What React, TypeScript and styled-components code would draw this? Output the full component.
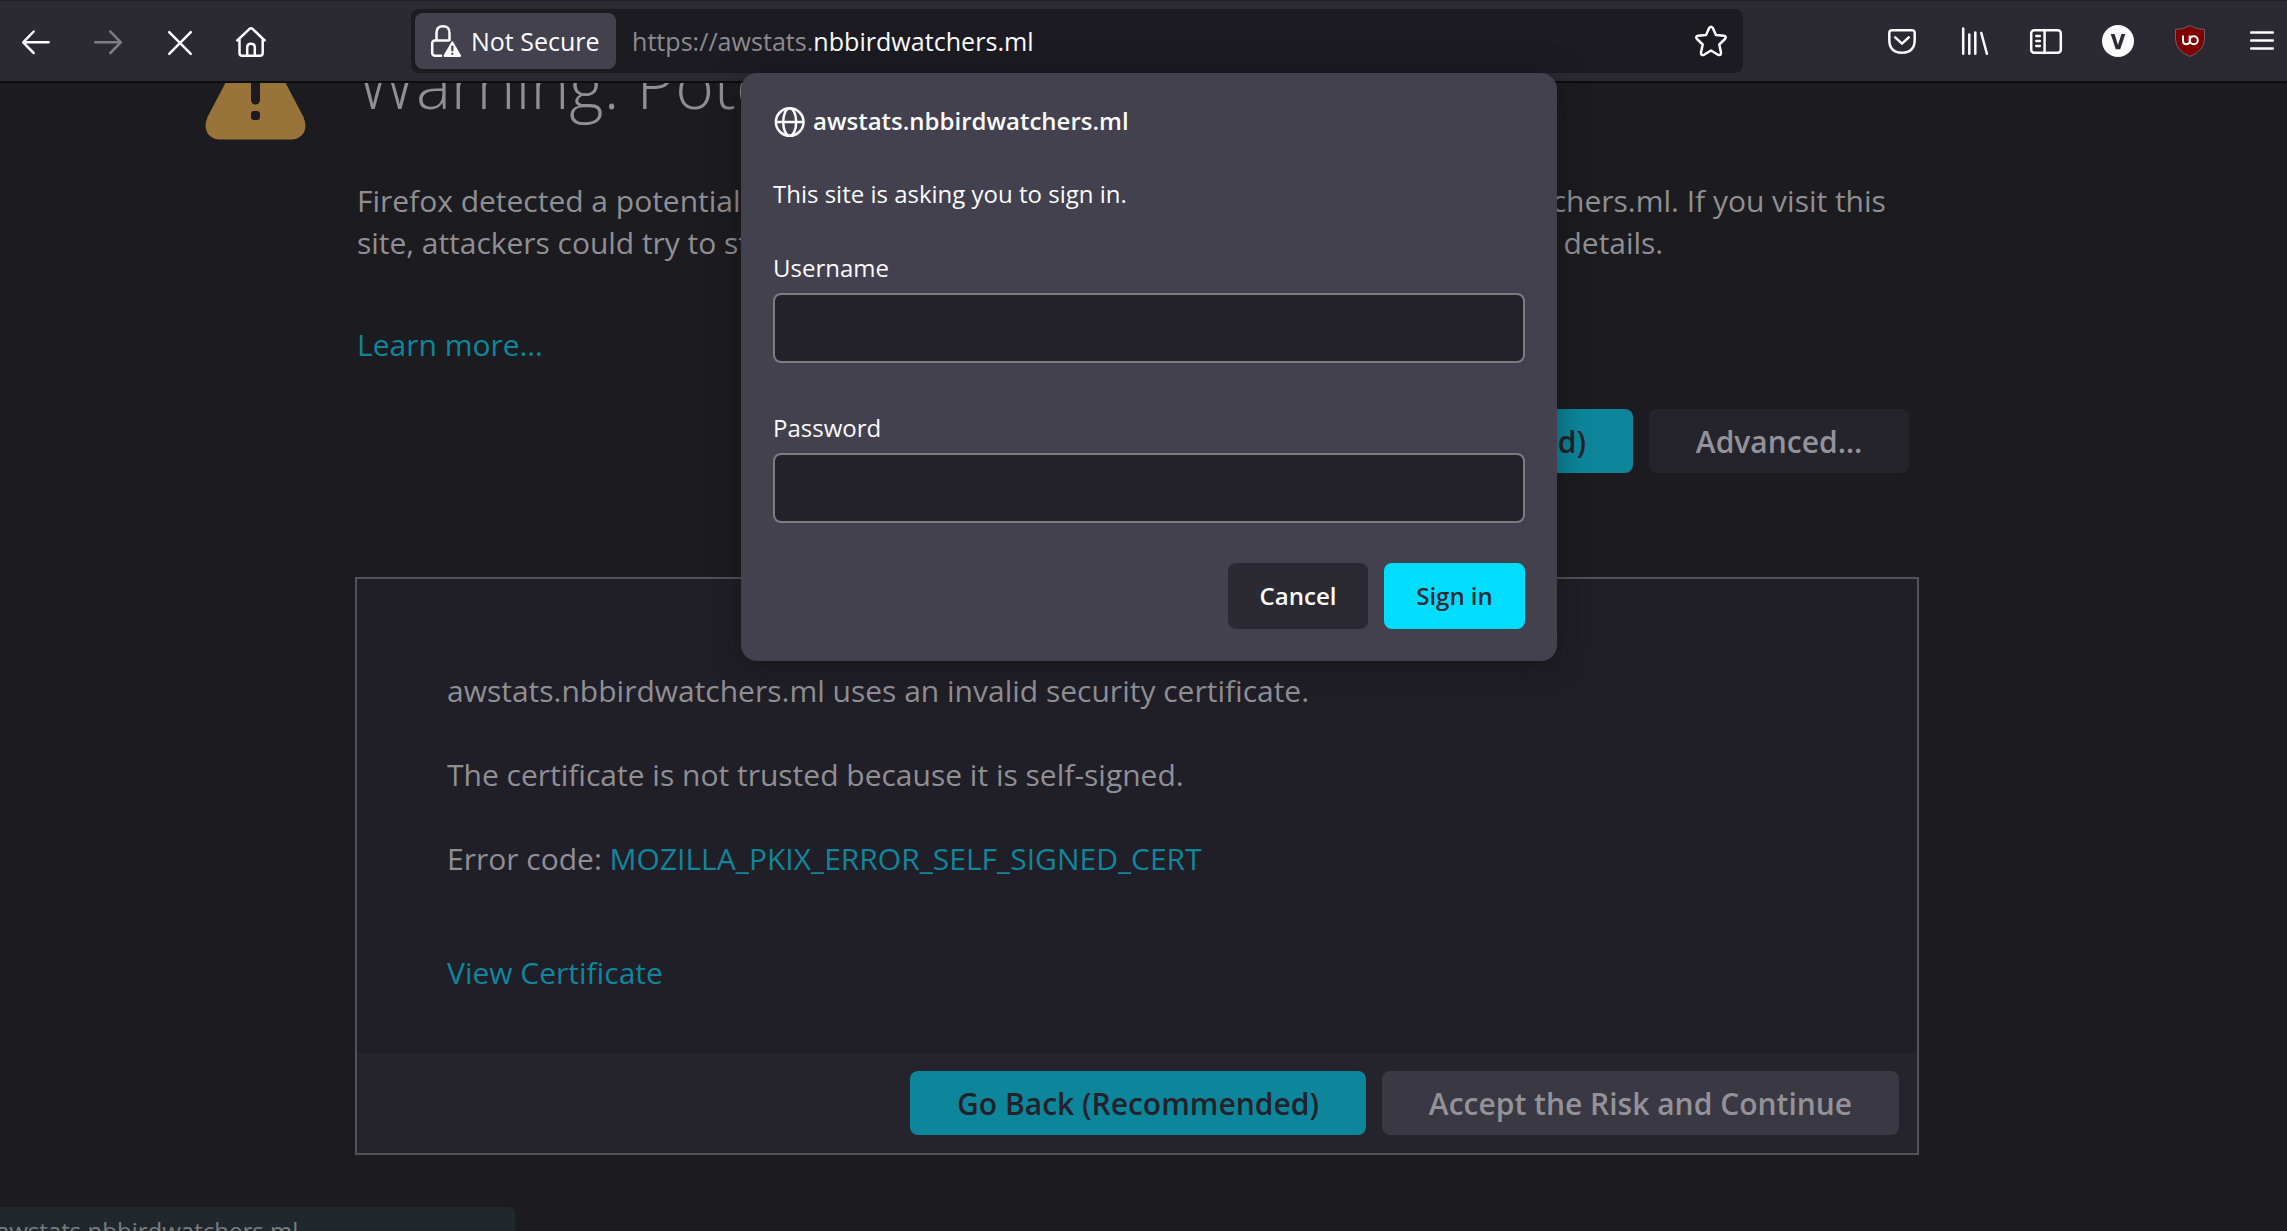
import React from "react";
import styled, { createGlobalStyle } from "styled-components";

const Global = createGlobalStyle`
  * { box-sizing: border-box; }
  html, body { margin: 0; padding: 0; background: #1c1b20; overflow: hidden; }
  body { font-family: "Open Sans", "Noto Sans", sans-serif; }
  p, h1 { margin: 0; }
  button { font-family: inherit; border: 0; padding: 0; margin: 0; }
`;

const Window = styled.div`
  position: relative;
  width: 2287px;
  height: 1231px;
  overflow: hidden;
  display: flex;
  flex-direction: column;
`;

const Toolbar = styled.header`
  flex: none;
  height: 83px;
  display: flex;
  align-items: center;
  background: #2b2a33;
  border-top: 1px solid #1f1e25;
  border-bottom: 2px solid #0d0c0f;
`;

const NavGroup = styled.nav`
  display: flex;
  flex: none;
  align-items: center;
  width: 411px;
`;

const ActionGroup = styled.div`
  display: flex;
  flex: none;
  align-items: center;
  margin-left: 123px;
`;

const IconButton = styled.button<{ $dim?: boolean }>`
  width: 72px;
  height: 64px;
  flex: none;
  display: flex;
  align-items: center;
  justify-content: center;
  background: none;
  color: #fbfbfe;
  opacity: ${(p) => (p.$dim ? 0.4 : 1)};
`;

const HomeButton = styled(IconButton)`
  width: 70px;
`;

const UrlBar = styled.div`
  width: 1332px;
  flex: none;
  height: 64px;
  padding: 0 4px;
  display: flex;
  align-items: center;
  background: #1c1b22;
  border-radius: 8px;
`;

const Identity = styled.div`
  width: 201px;
  height: 56px;
  padding-left: 14px;
  display: flex;
  align-items: center;
  gap: 8px;
  border-radius: 8px;
  background: #42414d;
  color: #fbfbfe;
  font-size: 25px;
  white-space: nowrap;
`;

const Address = styled.div`
  flex: 1;
  padding-left: 16px;
  font-size: 25.1px;
  color: #fbfbfe;
  white-space: nowrap;
`;

const Faded = styled.span`
  color: #8c8b91;
`;

const StarSlot = styled.div`
  display: flex;
  margin-right: 10px;
`;

const Page = styled.main`
  flex: 1;
  min-height: 0;
  overflow: hidden;
  padding-left: 205px;
  color: #908f94;
  font-size: 30px;
  line-height: 42px;
`;

const Heading = styled.div`
  display: flex;
  height: 90px;
  margin-top: -50px;
  gap: 51px;
`;

const Title = styled.h1`
  font-size: 66px;
  line-height: 90px;
  font-weight: 300;
  white-space: nowrap;
  padding-top: 5px;
`;

const Content = styled.section`
  width: 1564px;
  margin-left: 150px;
`;

const Intro = styled.p`
  padding: 57px 0 0 2px;
  white-space: nowrap;
`;

const Line = styled.span<{ $tracking: number }>`
  display: block;
  letter-spacing: ${(p) => p.$tracking}px;
`;

const LinkRow = styled.p`
  padding: 60px 0 0 2px;
`;

const Link = styled.a`
  color: #0f869b;
`;

const ButtonRow = styled.div`
  display: flex;
  justify-content: flex-end;
  gap: 16px;
  padding: 43px 10px 0 0;
`;

const PageButton = styled.button<{ $w: number; $kind: "primary" | "plain" | "raised" }>`
  width: ${(p) => p.$w}px;
  height: 64px;
  padding-top: 2px;
  border-radius: 8px;
  font-size: 30px;
  font-weight: 600;
  line-height: 42px;
  white-space: nowrap;
  color: ${(p) => (p.$kind === "primary" ? "#23222b" : "#939298")};
  background: ${(p) => ({ primary: "#0d869b", plain: "#25242c", raised: "#3a3842" })[p.$kind]};
`;

const ErrorPanel = styled.section`
  margin-top: 104px;
  height: 578px;
  display: flex;
  flex-direction: column;
  border: 2px solid #535259;
  background: #201e27;
`;

const ErrorText = styled.div`
  flex: 1;
  padding: 91px 0 0 90px;
  display: flex;
  flex-direction: column;
  gap: 42px;
`;

const CertificateRow = styled.p`
  padding-top: 30px;
`;

const PanelFooter = styled.div`
  height: 100px;
  display: flex;
  align-items: center;
  justify-content: flex-end;
  gap: 16px;
  padding-right: 18px;
  background: #25232c;
`;

const Dialog = styled.form`
  position: absolute;
  left: 741px;
  top: 73px;
  width: 816px;
  height: 588px;
  padding: 32px;
  display: flex;
  flex-direction: column;
  border-radius: 16px;
  background: #42414d;
  color: #fbfbfe;
  font-size: 24px;
  line-height: 32px;
  box-shadow: 0 4px 32px rgba(12, 12, 13, 0.4);
`;

const DialogTitle = styled.div`
  display: flex;
  align-items: center;
  gap: 8px;
  font-weight: 600;
  height: 34px;
`;

const SiteName = styled.span`
  padding-bottom: 2px;
`;

const Message = styled.p`
  margin-top: 39px;
`;

const Field = styled.label<{ $gap: number }>`
  display: flex;
  flex-direction: column;
  gap: 9px;
  margin-top: ${(p) => p.$gap}px;
`;

const Input = styled.input`
  width: 752px;
  height: 70px;
  border: 2px solid #7c7b82;
  border-radius: 8px;
  background: #23222b;
  outline: none;
`;

const DialogActions = styled.div`
  display: flex;
  justify-content: flex-end;
  gap: 16px;
  margin-top: 40px;
`;

const DialogButton = styled.button<{ $primary?: boolean }>`
  width: ${(p) => (p.$primary ? 141 : 140)}px;
  height: 66px;
  padding-bottom: 1px;
  border-radius: 8px;
  font-size: 24px;
  font-weight: 600;
  color: ${(p) => (p.$primary ? "#2b2a33" : "#fbfbfe")};
  background: ${(p) => (p.$primary ? "#00ddff" : "#2b2a33")};
`;

const StatusPanel = styled.div`
  position: absolute;
  left: -8px;
  bottom: -16px;
  width: 523px;
  height: 40px;
  padding: 8px 0 0 4px;
  border-radius: 0 6px 0 0;
  background: #20282d;
  color: #7b7c80;
  font-size: 24px;
  line-height: 32px;
`;

const stroke = { fill: "none", stroke: "currentColor", strokeWidth: 2.5, strokeLinecap: "round", strokeLinejoin: "round" } as const;

const Arrow = ({ flip }: { flip?: boolean }) => (
  <svg width="32" height="32" viewBox="0 0 32 32" {...stroke}>
    <path d={flip ? "M3.300 17.300H28.500M18.300 6.500L28.800 17.300L18.300 28" : "M28.700 17.300H3.500M13.700 6.500L3.200 17.300L13.700 28"} />
  </svg>
);

export default function App() {
  return (
    <>
      <Global />
      <Window>
        <Toolbar>
          <NavGroup>
            <IconButton><Arrow /></IconButton>
            <IconButton $dim><Arrow flip /></IconButton>
            <IconButton>
              <svg width="32" height="32" viewBox="0 0 32 32" {...stroke}><path d="M5.200 7.200L26.800 28.800M26.800 7.200L5.200 28.800" /></svg>
            </IconButton>
            <HomeButton>
              <svg width="30" height="32" viewBox="0 0 30 32" {...stroke}>
                <path d="M1.300 15.500L13.500 3.800Q15 2.600 16.500 3.800L28.700 15.500M3.500 14V28Q3.500 30.700 6.200 30.700H24Q26.700 30.700 26.700 28V14M11.200 30V22.300Q11.200 18.700 15 18.700Q18.800 18.700 18.800 22.300V30" />
              </svg>
            </HomeButton>
          </NavGroup>
          <UrlBar>
            <Identity>
              <svg width="34" height="34" viewBox="0 0 34 34" {...stroke}>
                <path d="M7.500 16V8.800Q7.500 2.300 14 2.300Q20.500 2.300 20.500 8.800V16M12 31.800H6.200Q3.200 31.800 3.200 28.800V19.500Q3.200 16.500 6.200 16.500H19.500" />
                <path d="M23.300 18.500L31 31.900H15.600Z" fill="currentColor" stroke="currentColor" strokeWidth="2.200" />
                <path d="M23.300 22.500V26.500M23.300 29.800V30" stroke="#42414d" strokeWidth="2.200" />
              </svg>
              Not Secure
            </Identity>
            <Address><Faded>https://awstats.</Faded>nbbirdwatchers.ml</Address>
            <StarSlot>
              <svg width="36" height="36" viewBox="0 0 36 36" {...stroke} color="#fbfbfe">
                <path d="M16.300 4.800Q18 2.600 19.700 4.800L23 12L31 12.800Q34 13.600 32 16L26.300 21.500L28 29.500Q28 33 25 31.800L18 27.500L11 31.800Q8 33 8 29.500L9.700 21.500L4 16Q2 13.600 5 12.800L13 12Z" />
              </svg>
            </StarSlot>
          </UrlBar>
          <ActionGroup>
            <IconButton>
              <svg width="32" height="32" viewBox="0 0 32 32" {...stroke}>
                <path d="M6 5.200H26Q28.700 5.200 28.700 7.900V14.700Q28.700 27.700 16 27.700Q3.300 27.700 3.300 14.700V7.900Q3.300 5.200 6 5.200ZM9.200 12.300L16 18.700L22.800 12.300" />
              </svg>
            </IconButton>
            <IconButton>
              <svg width="32" height="32" viewBox="0 0 32 32" {...stroke}>
                <path d="M5.200 3.500V28.800M11.300 9.500V28.800M17.300 7.500V28.800M23.300 8L28.900 28.800" />
              </svg>
            </IconButton>
            <IconButton>
              <svg width="34" height="32" viewBox="0 0 34 32" {...stroke}>
                <rect x="2.200" y="5.200" width="29.600" height="22.600" rx="3" />
                <path d="M15.600 5V28M7.300 11H10.800M7.300 16H10.800M7.300 21H10.800" />
              </svg>
            </IconButton>
            <IconButton>
              <svg width="32" height="32" viewBox="0 0 32 32">
                <circle cx="16" cy="16" r="16" fill="#fbfbfe" />
                <path d="M8.700 9H12.600L16 20L19.400 9H23.300L18.200 24.300H13.800Z" fill="#2b2a33" />
              </svg>
            </IconButton>
            <IconButton>
              <svg width="32" height="32" viewBox="0 0 32 32">
                <path d="M16 .6Q22 4.500 30.500 4.500V14Q30.500 25 16 31.500Q1.500 25 1.500 14V4.500Q10 4.500 16 .6Z" fill="#800000" stroke="#6d5f66" />
                <path d="M9 10.500V15.500Q9 19.200 12.300 19.200Q15.700 19.200 15.700 15.500V10.500" fill="none" stroke="#fff" strokeWidth="2" />
                <circle cx="19.800" cy="15.200" r="4" fill="none" stroke="#fff" strokeWidth="2" />
              </svg>
            </IconButton>
            <IconButton>
              <svg width="32" height="32" viewBox="0 0 32 32" {...stroke}><path d="M5.200 7.500H26.800M5.200 15.500H26.800M5.200 23.500H26.800" /></svg>
            </IconButton>
          </ActionGroup>
        </Toolbar>

        <Page>
          <Heading>
            <svg width="101" height="107" viewBox="0 0 101 107">
              <path d="M42 9Q50.500 -3 59 9L98.500 84Q104 98 94 104.500Q91 106.500 87 106.500H14Q10 106.500 7 104.500Q-3 98 2.500 84Z" fill="#98743a" />
              <path d="M50.500 35V67" stroke="#1c1b20" strokeWidth="9" strokeLinecap="round" />
              <rect x="46" y="78" width="9" height="9" rx="3" fill="#1c1b20" />
            </svg>
            <Title>Warning: Potential Security Risk Ahead</Title>
          </Heading>
          <Content>
            <Intro>
              <Line $tracking={-0.014}>Firefox detected a potential security threat and did not continue to awstats.nbbirdwatchers.ml. If you visit this</Line>
              <Line $tracking={-0.03}>site, attackers could try to steal information like your passwords, emails, or credit card details.</Line>
            </Intro>
            <LinkRow><Link>Learn more…</Link></LinkRow>
            <ButtonRow>
              <PageButton $w={456} $kind="primary">Go Back (Recommended)</PageButton>
              <PageButton $w={260} $kind="plain">Advanced…</PageButton>
            </ButtonRow>
            <ErrorPanel>
              <ErrorText>
                <p>awstats.nbbirdwatchers.ml uses an invalid security certificate.</p>
                <p>The certificate is not trusted because it is self-signed.</p>
                <p>Error code: <Link>MOZILLA_PKIX_ERROR_SELF_SIGNED_CERT</Link></p>
                <CertificateRow><Link>View Certificate</Link></CertificateRow>
              </ErrorText>
              <PanelFooter>
                <PageButton $w={456} $kind="primary">Go Back (Recommended)</PageButton>
                <PageButton $w={517} $kind="raised">Accept the Risk and Continue</PageButton>
              </PanelFooter>
            </ErrorPanel>
          </Content>
        </Page>

        <StatusPanel>awstats.nbbirdwatchers.ml</StatusPanel>

        <Dialog>
          <DialogTitle>
            <svg width="32" height="32" viewBox="0 0 32 32" {...stroke}>
              <circle cx="16.700" cy="16" r="13.800" />
              <ellipse cx="16.700" cy="16" rx="6.500" ry="13.800" />
              <path d="M3.200 16H30.200" />
            </svg>
            <SiteName>awstats.nbbirdwatchers.ml</SiteName>
          </DialogTitle>
          <Message>This site is asking you to sign in.</Message>
          <Field $gap={42}>Username<Input /></Field>
          <Field $gap={49}>Password<Input type="password" /></Field>
          <DialogActions>
            <DialogButton type="button">Cancel</DialogButton>
            <DialogButton type="button" $primary>Sign in</DialogButton>
          </DialogActions>
        </Dialog>
      </Window>
    </>
  );
}
